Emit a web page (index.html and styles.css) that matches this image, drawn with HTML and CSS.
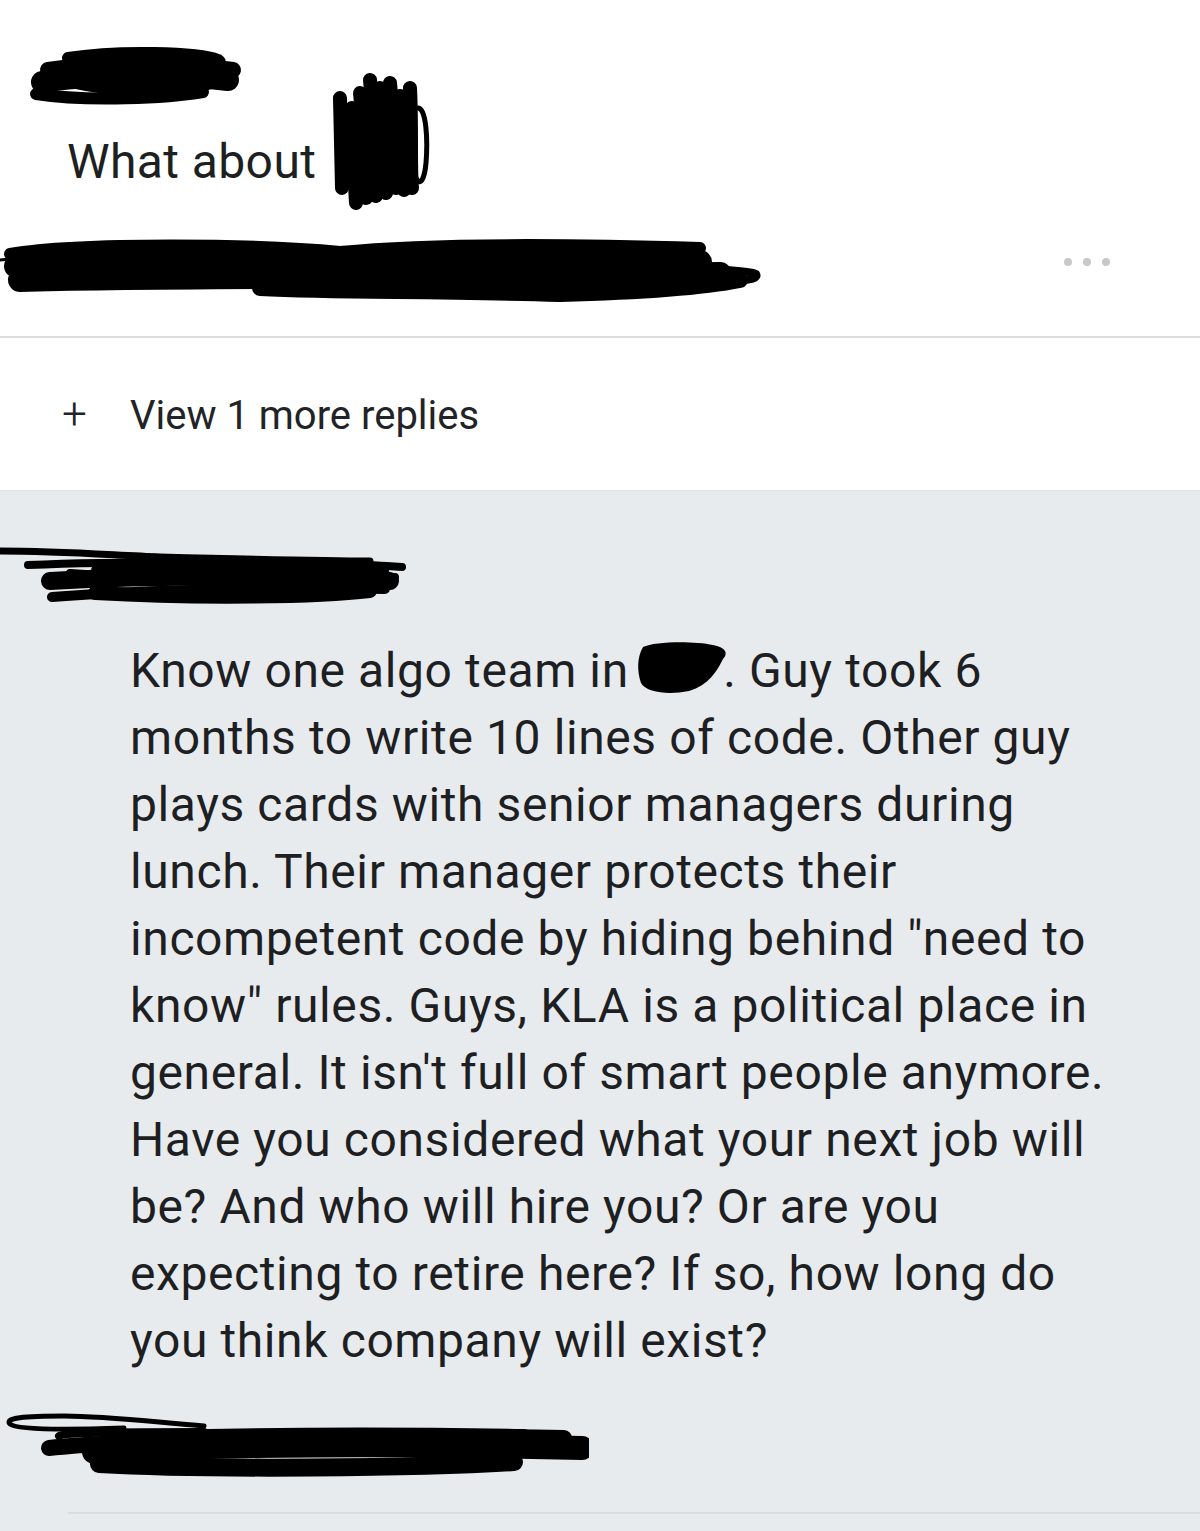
FILE: index.html
```html
<!DOCTYPE html>
<html>
<head>
<meta charset="utf-8">
<link rel="stylesheet" href="styles.css">
</head>
<body>
<section class="comment">
  <div class="comment-top">
    <div class="comment-left">
      <svg class="scrib scrib-name" width="215" height="62" viewBox="0 0 215 62">
        <g fill="none" stroke="#000" stroke-linecap="round">
          <path d="M40 14 C90 6 170 8 190 16 C200 22 160 26 120 24" stroke-width="12"/>
          <path d="M20 26 C70 18 150 18 205 26" stroke-width="16"/>
          <path d="M14 38 C60 30 150 30 200 36" stroke-width="22"/>
          <path d="M8 50 C60 58 140 54 175 48" stroke-width="12"/>
          <path d="M30 30 C80 46 160 46 190 32" stroke-width="20"/>
          <path d="M60 22 C100 18 150 20 180 24" stroke-width="16"/>
        </g>
      </svg>
      <p class="msg">What about</p>
    </div>
    <svg class="scrib scrib-tall" width="100" height="145" viewBox="0 0 100 145">
      <g fill="none" stroke="#000" stroke-linecap="round" stroke-width="14">
        <path d="M10 30 L12 120"/>
        <path d="M22 40 C26 80 24 110 26 135"/>
        <path d="M30 25 C34 60 30 100 36 130"/>
        <path d="M40 12 C44 50 40 100 46 128"/>
        <path d="M50 20 C54 60 52 100 56 125"/>
        <path d="M60 15 C64 55 60 95 66 120"/>
        <path d="M70 28 C74 60 72 95 74 122"/>
        <path d="M80 20 C82 60 80 100 82 120"/>
        <path d="M18 110 L70 30"/>
        <path d="M20 60 L76 110"/>
        <path d="M16 80 L78 70"/>
      </g>
      <path d="M88 40 C96 40 98 70 96 95 C94 118 86 120 84 100" fill="none" stroke="#000" stroke-width="5" stroke-linecap="round"/>
    </svg>
  </div>
  <div class="comment-meta">
    <svg class="scrib scrib-long" width="768" height="72" viewBox="0 0 768 72">
      <g fill="none" stroke="#000" stroke-linecap="round">
        <path d="M0 28 C60 22 120 12 200 14" stroke-width="3"/>
        <path d="M10 22 C80 10 260 12 340 20 C400 14 500 10 700 16" stroke-width="12"/>
        <path d="M16 34 C120 26 300 24 700 30" stroke-width="24"/>
        <path d="M20 48 C150 44 300 46 720 42" stroke-width="24"/>
        <path d="M260 56 C340 60 420 58 560 62 C640 60 700 56 740 48" stroke-width="16"/>
        <path d="M440 38 C600 36 740 34 756 42 C760 48 740 50 720 46" stroke-width="8"/>
      </g>
    </svg>
    <div class="dots"><span></span><span></span><span></span></div>
  </div>
</section>

<div class="more-replies">
  <span class="plus">+</span>
  <span class="more-label">View 1 more replies</span>
</div>

<section class="reply">
  <svg class="scrib scrib-reply-name" width="410" height="66" viewBox="0 0 410 66">
    <g fill="none" stroke="#000" stroke-linecap="round">
      <path d="M0 10 C60 10 110 14 160 16 C240 18 320 20 370 20" stroke-width="7"/>
      <path d="M28 24 C120 20 300 20 402 26" stroke-width="8"/>
      <path d="M100 30 C200 26 300 26 380 30" stroke-width="18"/>
      <path d="M50 40 C150 34 300 34 390 40" stroke-width="18"/>
      <path d="M52 56 C150 48 300 46 385 48" stroke-width="10"/>
      <path d="M95 52 C200 58 320 56 370 50" stroke-width="14"/>
      <path d="M70 32 C150 38 320 40 395 36" stroke-width="8"/>
    </g>
  </svg>
  <p class="reply-body">Know one algo team in <svg class="scrib scrib-inline" width="94" height="54" viewBox="0 0 94 54"><path d="M8 6 C20 0 60 0 78 4 C90 6 94 12 88 18 C82 30 74 44 54 50 C34 54 12 52 6 42 C2 30 2 16 8 6 Z" fill="#000"/></svg>. Guy took 6<br>months to write 10 lines of code. Other guy<br>plays cards with senior managers during<br>lunch. Their manager protects their<br>incompetent code by hiding behind "need to<br>know" rules. Guys, KLA is a political place in<br>general. It isn't full of smart people anymore.<br>Have you considered what your next job will<br>be? And who will hire you? Or are you<br>expecting to retire here? If so, how long do<br>you think company will exist?</p>
  <svg class="scrib scrib-reply-foot" width="585" height="78" viewBox="0 0 585 78">
    <g fill="none" stroke="#000" stroke-linecap="round">
      <path d="M200 22 C150 18 100 12 60 12 C20 12 0 14 6 20 C12 26 60 26 120 24" stroke-width="5"/>
      <path d="M55 32 C60 28 120 28 200 28" stroke-width="8"/>
      <path d="M45 44 C100 38 300 30 560 34" stroke-width="16"/>
      <path d="M90 48 C200 40 400 40 578 44" stroke-width="24"/>
      <path d="M95 60 C200 66 420 64 510 58" stroke-width="18"/>
      <path d="M130 34 C250 30 400 30 520 32" stroke-width="14"/>
    </g>
  </svg>
  <div class="divider"></div>
</section>
</body>
</html>
```

FILE: styles.css
```css
html, body {
  margin: 0;
  padding: 0;
}
body {
  width: 1200px;
  height: 1531px;
  overflow: hidden;
  background: #e8ebee;
  font-family: Roboto, "Liberation Sans", Arial, sans-serif;
  color: #1e1f21;
}
.scrib {
  display: block;
}
.comment {
  background: #ffffff;
  height: 336px;
  border-bottom: 2px solid #dcdcdc;
  box-sizing: content-box;
}
.comment-top {
  display: flex;
  align-items: flex-start;
}
.comment-left {
  display: flex;
  flex-direction: column;
  padding-top: 44px;
}
.scrib-name {
  margin-left: 28px;
}
.msg {
  margin: 0;
  margin-left: 67px;
  font-size: 48px;
  line-height: 58px;
  margin-top: 27px;
  letter-spacing: 0.4px;
}
.scrib-tall {
  margin-top: 68px;
  margin-left: 14px;
}
.comment-meta {
  display: flex;
  align-items: center;
  justify-content: space-between;
  margin-top: 19px;
  padding-right: 90px;
}
.dots {
  display: flex;
  gap: 11px;
  margin-top: -12px;
}
.dots span {
  width: 8px;
  height: 8px;
  border-radius: 50%;
  background: #c8c8c8;
}
.more-replies {
  background: #ffffff;
  height: 153px;
  display: flex;
  align-items: center;
  padding-left: 62px;
  border-bottom: 1px solid #e0e2e6;
  box-sizing: border-box;
  font-size: 40px;
  color: #222326;
}
.plus {
  font-size: 44px;
  font-weight: 300;
  width: 68px;
  margin-top: 0;
}
.more-label {
  margin-top: 2px;
}
.reply {
  padding-top: 50px;
}
.reply-body {
  margin: 30px 0 0 130px;
  font-size: 48px;
  line-height: 67px;
  letter-spacing: 0.6px;
  color: #1e1f22;
}
.scrib-inline {
  display: inline-block;
  vertical-align: -8px;
  margin-right: -6px;
  margin-left: -6px;
}
.scrib-reply-foot {
  margin-top: 30px;
  margin-left: 4px;
}
.divider {
  margin-top: 30px;
  margin-left: 68px;
  height: 2px;
  background: #d9dce0;
}
```
